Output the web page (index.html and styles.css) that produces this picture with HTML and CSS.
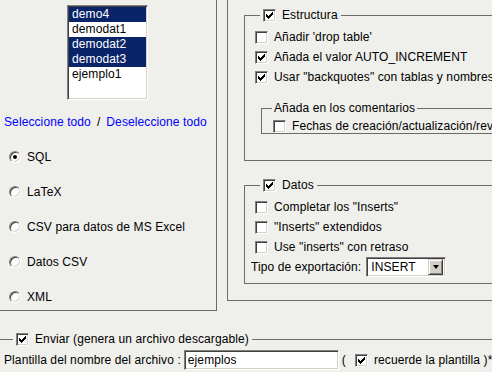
FILE: index.html
```html
<!DOCTYPE html>
<html lang="es">
<head>
<meta charset="utf-8">
<title>Exportar</title>
<link rel="stylesheet" href="styles.css">
</head>
<body>
<div class="top">
  <fieldset class="panel left">
    <div class="listbox">
      <div class="opt sel">demo4</div>
      <div class="opt">demodat1</div>
      <div class="opt sel">demodat2</div>
      <div class="opt sel">demodat3</div>
      <div class="opt">ejemplo1</div>
    </div>
    <div class="links"><a href="#">Seleccione todo</a><span class="sep">/</span><a href="#">Deseleccione todo</a></div>
    <div class="radios">
      <label class="rrow"><span class="radio on"></span>SQL</label>
      <label class="rrow"><span class="radio"></span>LaTeX</label>
      <label class="rrow"><span class="radio"></span>CSV para datos de MS Excel</label>
      <label class="rrow"><span class="radio"></span>Datos CSV</label>
      <label class="rrow"><span class="radio"></span>XML</label>
    </div>
  </fieldset>
  <fieldset class="panel right">
    <fieldset class="group struct">
      <legend><span class="lg"><span class="cb on"></span>Estructura</span></legend>
      <label class="row"><span class="cb"></span>Añadir 'drop table'</label>
      <label class="row"><span class="cb on"></span>Añada el valor AUTO_INCREMENT</label>
      <label class="row"><span class="cb on"></span>Usar "backquotes" con tablas y nombres de campos</label>
      <fieldset class="sub">
        <legend><span class="lg">Añada en los comentarios</span></legend>
        <label class="row short"><span class="cb"></span>Fechas de creación/actualización/revisión</label>
      </fieldset>
    </fieldset>
    <fieldset class="group datos">
      <legend><span class="lg"><span class="cb on"></span>Datos</span></legend>
      <label class="row"><span class="cb"></span>Completar los "Inserts"</label>
      <label class="row"><span class="cb"></span>"Inserts" extendidos</label>
      <label class="row"><span class="cb"></span>Use "inserts" con retraso</label>
      <div class="row tipo">Tipo de exportación:<span class="dropdown"><span class="dd-text">INSERT</span><span class="dd-btn"><span class="arrow"></span></span></span></div>
    </fieldset>
  </fieldset>
</div>
<fieldset class="save">
  <legend><span class="lg"><span class="cb on"></span>Enviar (genera un archivo descargable)</span></legend>
  <div class="row fname">Plantilla del nombre del archivo :<span class="textbox">ejemplos</span><span class="paren">(</span><span class="cb on"></span>recuerde la plantilla )*</div>
</fieldset>
</body>
</html>
```
FILE: styles.css
```css
* { box-sizing: border-box; }

body {
  margin: 0;
  width: 492px;
  height: 372px;
  overflow: hidden;
  background: #efefeb;
  color: #000;
  font-family: "Liberation Sans", Arial, sans-serif;
  font-size: 12px;
  letter-spacing: 0.1px;
}

fieldset {
  margin: 0;
  border: 1px solid #6b6b6b;
  min-width: 0;
}

legend {
  padding: 0 3px;
  line-height: 14px;
}

.lg {
  display: flex;
  align-items: center;
  height: 14px;
  white-space: nowrap;
}

.top {
  display: flex;
  align-items: flex-start;
}

.left {
  margin: -20px 0 0 -20px;
  width: 237px;
  height: 331px;
  padding: 24px 0 0 23px;
  flex: none;
}

.listbox {
  margin-left: 63px;
  width: 81px;
  height: 95px;
  padding: 1px;
  background: #fff;
  border: 1px solid;
  border-color: #808080 #fff #fff #808080;
  box-shadow: inset 1px 1px 0 #404040, inset -1px -1px 0 #d4d0c8;
}

.opt {
  height: 15px;
  line-height: 15px;
  padding-left: 3px;
}

.opt.sel {
  background: #0a246a;
  color: #fff;
}

.links {
  margin-top: 15px;
  line-height: 15px;
  white-space: nowrap;
}

.links a {
  color: #0000ff;
  text-decoration: none;
}

.sep {
  margin: 0 6px;
}

.radios {
  margin-top: 19px;
  display: flex;
  flex-direction: column;
  gap: 19px;
}

.rrow {
  display: flex;
  align-items: center;
  height: 16px;
  white-space: nowrap;
}

.radio {
  position: relative;
  flex: none;
  width: 12px;
  height: 12px;
  margin: 0 6px 0 5px;
  border-radius: 50%;
  background: #fff;
  border: 1px solid;
  border-color: #808080 #fff #fff #808080;
  box-shadow: inset 1px 1px 0 #404040, inset -1px -1px 0 #d4d0c8;
}

.radio.on::after {
  content: "";
  position: absolute;
  left: 3px;
  top: 3px;
  width: 4px;
  height: 4px;
  border-radius: 50%;
  background: #000;
}

.right {
  margin: -20px 0 0 10px;
  width: 320px;
  height: 321px;
  padding: 27px 0 0 16px;
  flex: none;
}

.group {
  width: 420px;
  padding: 5px 0 6px 6px;
}

.group > legend {
  margin-left: 9px;
}

.struct {
  padding-bottom: 26px;
}

.datos {
  margin-top: 17px;
}

.row {
  display: flex;
  align-items: center;
  height: 20px;
  white-space: nowrap;
}

.row.short {
  height: 14px;
}

.cb {
  position: relative;
  flex: none;
  width: 13px;
  height: 13px;
  margin: 0 6px 0 4px;
  background: #fff;
  border: 1px solid;
  border-color: #808080 #fff #fff #808080;
  box-shadow: inset 1px 1px 0 #404040, inset -1px -1px 0 #d4d0c8;
}

.lg .cb {
  margin-left: 0;
}

.cb.on::after {
  content: "";
  position: absolute;
  left: 2px;
  top: 2px;
  width: 7px;
  height: 7px;
  background:
    linear-gradient(#000, #000) 6px 0 / 1px 3px no-repeat,
    linear-gradient(#000, #000) 5px 1px / 1px 3px no-repeat,
    linear-gradient(#000, #000) 4px 2px / 1px 3px no-repeat,
    linear-gradient(#000, #000) 3px 3px / 1px 3px no-repeat,
    linear-gradient(#000, #000) 2px 4px / 1px 3px no-repeat,
    linear-gradient(#000, #000) 1px 3px / 1px 3px no-repeat,
    linear-gradient(#000, #000) 0 2px / 1px 3px no-repeat;
}

.sub {
  margin: 14px 0 0 10px;
  width: 400px;
  padding: 4px 0 0 7px;
}

.sub > legend {
  margin-left: 3px;
  padding: 0 2px;
}

.tipo .dropdown {
  margin-left: 5px;
}

.dropdown {
  display: flex;
  align-items: center;
  justify-content: space-between;
  width: 80px;
  height: 20px;
  padding: 2px;
  background: #fff;
  border: 1px solid;
  border-color: #808080 #fff #fff #808080;
  box-shadow: inset 1px 1px 0 #404040, inset -1px -1px 0 #d4d0c8;
}

.dd-text {
  padding-left: 2px;
  line-height: 14px;
}

.dd-btn {
  display: flex;
  align-items: center;
  justify-content: center;
  width: 15px;
  height: 16px;
  background: #d4d0c8;
  border: 1px solid;
  border-color: #d4d0c8 #404040 #404040 #d4d0c8;
  box-shadow: inset 1px 1px 0 #fff, inset -1px -1px 0 #808080;
}

.arrow {
  width: 0;
  height: 0;
  border-left: 3.5px solid transparent;
  border-right: 3.5px solid transparent;
  border-top: 4px solid #000;
}

.save {
  margin: 21px 0 0 -20px;
  width: 640px;
  height: 70px;
  padding: 4px 0 0 23px;
}

.save > legend {
  margin-left: 9px;
}

.textbox {
  display: flex;
  align-items: center;
  width: 155px;
  height: 20px;
  margin-left: 3px;
  padding-left: 3px;
  background: #fff;
  border: 1px solid;
  border-color: #808080 #fff #fff #808080;
  box-shadow: inset 1px 1px 0 #404040, inset -1px -1px 0 #d4d0c8;
}

.paren {
  margin: 0 5px 0 3px;
}

.fname .cb {
  margin-left: 4px;
}
```
